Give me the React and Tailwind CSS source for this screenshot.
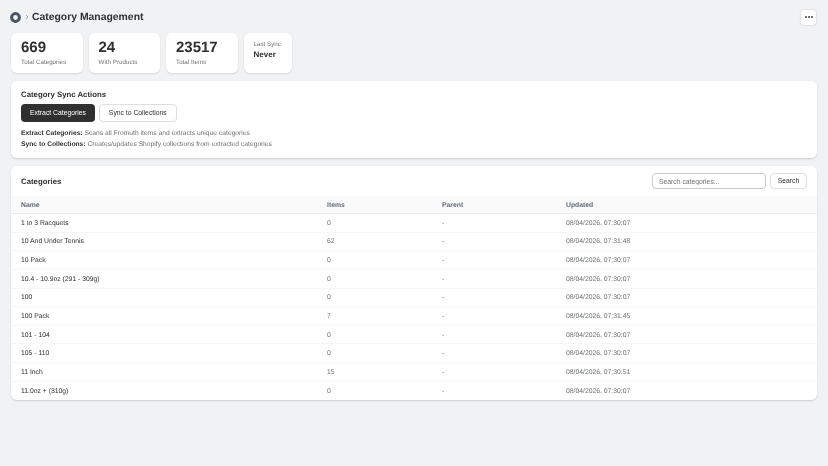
const rows = [
  { name: "1 to 3 Racquets", items: 0, updated: "08/04/2026, 07:30:07" },
  { name: "10 And Under Tennis", items: 62, updated: "08/04/2026, 07:31:48" },
  { name: "10 Pack", items: 0, updated: "08/04/2026, 07:30:07" },
  { name: "10.4 - 10.9oz (291 - 309g)", items: 0, updated: "08/04/2026, 07:30:07" },
  { name: "100", items: 0, updated: "08/04/2026, 07:30:07" },
  { name: "100 Pack", items: 7, updated: "08/04/2026, 07:31:45" },
  { name: "101 - 104", items: 0, updated: "08/04/2026, 07:30:07" },
  { name: "105 - 110", items: 0, updated: "08/04/2026, 07:30:07" },
  { name: "11 Inch", items: 15, updated: "08/04/2026, 07:30:51" },
  { name: "11.0oz + (310g)", items: 0, updated: "08/04/2026, 07:30:07" },
];

function StatCard({ value, label }) {
  return (
    <div className="w-[71.5px] h-[40px] bg-white rounded-[6px] shadow-[0_1px_2px_rgba(0,0,0,0.12)] pl-[10px] pt-[7px] flex-none">
      <div className="text-[15px] leading-[16px] font-bold text-[#303030]">{value}</div>
      <div className="text-[6.25px] leading-[10px] mt-[1.5px] text-[#6d7175]">{label}</div>
    </div>
  );
}

export default function App() {
  return (
    <div className="w-[828px] h-[466px] bg-[#f1f2f4] overflow-hidden">
      <div className="px-[11px] pt-[9px] will-change-transform [text-rendering:geometricPrecision] font-['Liberation_Sans',Arial,sans-serif]">
        <div className="flex items-center h-[16px]">
          <svg className="-ml-[1px]" width="11" height="11" viewBox="0 0 11 11">
            <circle cx="5.5" cy="5.5" r="3.9" fill="none" stroke="#4a5560" strokeWidth="3" />
          </svg>
          <svg className="ml-[4px]" width="4" height="6" viewBox="0 0 4 6">
            <path d="M1 1l2 2-2 2" fill="none" stroke="#8c9196" strokeWidth="0.8" />
          </svg>
          <h1 className="text-[10.4px] font-bold text-[#303030] ml-[3px] pt-[1px]">Category Management</h1>
          <button className="ml-auto mr-[1px] w-[15px] h-[15px] bg-white rounded-[3px] shadow-[0_0_2px_rgba(0,0,0,0.25)] flex items-center justify-center gap-[1px]">
            <span className="w-[2px] h-[2px] rounded-full bg-[#3f4448]" />
            <span className="w-[2px] h-[2px] rounded-full bg-[#3f4448]" />
            <span className="w-[2px] h-[2px] rounded-full bg-[#3f4448]" />
          </button>
        </div>

        <div className="flex gap-[6px] mt-[8px]">
          <StatCard value="669" label="Total Categories" />
          <StatCard value="24" label="With Products" />
          <StatCard value="23517" label="Total Items" />
          <div className="w-[48.5px] h-[40px] bg-white rounded-[6px] shadow-[0_1px_2px_rgba(0,0,0,0.12)] pl-[10px] pt-[7px] flex-none">
            <div className="text-[6.25px] leading-[9px] text-[#6d7175]">Last Sync</div>
            <div className="text-[8px] leading-[11px] font-bold text-[#303030]">Never</div>
          </div>
        </div>

        <section className="mt-[8px] h-[77px] bg-white rounded-[6px] shadow-[0_1px_2px_rgba(0,0,0,0.15)] px-[10px] pt-[8.5px]">
          <h2 className="text-[7.8px] leading-[10px] font-bold text-[#303030]">Category Sync Actions</h2>
          <div className="flex gap-[4px] mt-[4.5px]">
            <button className="h-[18px] w-[74px] rounded-[4px] bg-[#303030] text-white text-[6.8px]">Extract Categories</button>
            <button className="h-[18px] w-[77.5px] rounded-[4px] bg-white border border-[#dcdee0] text-[#303030] text-[6.8px]">Sync to Collections</button>
          </div>
          <p className="text-[6.72px] leading-[11px] mt-[6px] text-[#6d7175]">
            <b className="text-[#303030]">Extract Categories:</b> Scans all Fromuth items and extracts unique categories
          </p>
          <p className="text-[6.72px] leading-[11px] text-[#6d7175]">
            <b className="text-[#303030]">Sync to Collections:</b> Creates/updates Shopify collections from extracted categories
          </p>
        </section>

        <section className="mt-[8px] bg-white rounded-[6px] shadow-[0_1px_2px_rgba(0,0,0,0.15)] overflow-hidden">
          <div className="h-[30px] flex items-center justify-between px-[10px]">
            <h2 className="text-[7.8px] font-bold text-[#303030] pt-[2px]">Categories</h2>
            <div className="flex gap-[4px]">
              <input
                placeholder="Search categories..."
                className="w-[114px] h-[16px] border border-[#c9cccf] rounded-[4px] px-[6px] text-[6.8px] placeholder:text-[#6d7175] outline-none"
              />
              <button className="w-[37px] h-[16px] border border-[#dcdee0] rounded-[4px] text-[6.8px] text-[#303030]">Search</button>
            </div>
          </div>
          <table className="w-full table-fixed text-[6.8px]">
            <colgroup>
              <col className="w-[316px]" />
              <col className="w-[115px]" />
              <col className="w-[124px]" />
              <col />
            </colgroup>
            <thead>
              <tr className="h-[17.5px] bg-[#fafafa] border-b border-[#ebecee] text-left text-[#616a75]">
                <th className="pl-[10px] pt-[3px] font-bold">Name</th>
                <th className="pt-[3px] font-bold">Items</th>
                <th className="pt-[3px] font-bold">Parent</th>
                <th className="pt-[3px] font-bold">Updated</th>
              </tr>
            </thead>
            <tbody>
              {rows.map((r) => (
                <tr key={r.name} className="h-[18.65px] border-b border-[#f6f6f7] last:border-b-0 text-[#6d7175]">
                  <td className="pl-[10px] pt-[2px] text-[#303030]">{r.name}</td>
                  <td className="pt-[2px]">{r.items}</td>
                  <td className="pt-[2px]">-</td>
                  <td className="pt-[2px]">{r.updated}</td>
                </tr>
              ))}
            </tbody>
          </table>
        </section>
      </div>
    </div>
  );
}
